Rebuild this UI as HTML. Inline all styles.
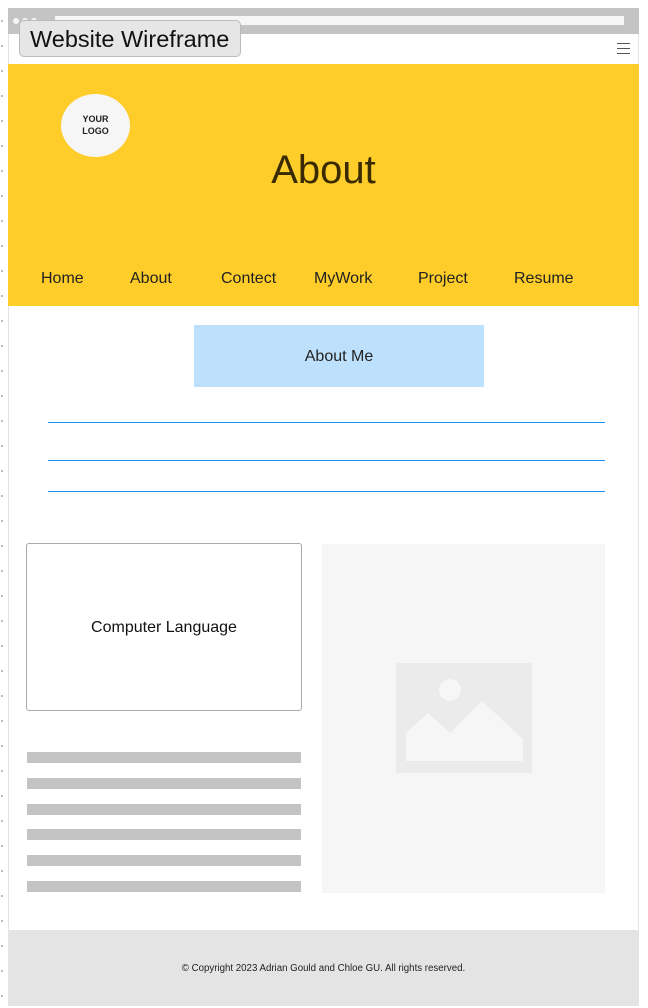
<!DOCTYPE html>
<html><head><meta charset="utf-8"><style>
*{margin:0;padding:0;box-sizing:border-box}
body{width:648px;height:1006px;background:#fff;position:relative;overflow:hidden;font-family:"Liberation Sans",sans-serif;color:#222}
.a{position:absolute}
.tick{position:absolute;left:1px;width:2px;height:2px;background:#bbb}
</style></head><body>
<div class="a" style="left:8px;top:8px;width:631px;height:998px;border:1px solid #e4e4e4"></div>
<div class="a" style="left:8px;top:8px;width:631px;height:26px;background:#c4c4c4"></div>
<div class="a" style="left:13px;top:18px;width:6px;height:6px;border-radius:50%;background:#f5f5f5"></div>
<div class="a" style="left:22px;top:18px;width:6px;height:6px;border-radius:50%;background:#f5f5f5"></div>
<div class="a" style="left:31px;top:18px;width:6px;height:6px;border-radius:50%;background:#f5f5f5"></div>
<div class="a" style="left:55px;top:16px;width:569px;height:9px;background:#f6f6f6"></div>
<div class="a" style="left:19px;top:20px;width:222px;height:37px;background:#e6e6e6;border:1px solid #bbb;border-radius:5px;font-size:23.5px;color:#111;line-height:36px;padding-left:10px;white-space:nowrap">Website Wireframe</div>
<div class="a" style="left:617px;top:43px;width:13px;height:1px;background:#555;box-shadow:0 5px 0 #555,0 10px 0 #555"></div>
<div class="a" style="left:8px;top:64px;width:631px;height:242px;background:#fecd2a"></div>
<div class="a" style="left:61px;top:94px;width:69px;height:63px;border-radius:50%;background:#f6f6f6;font-size:9px;font-weight:bold;text-align:center;line-height:12px;padding-top:19px;color:#222">YOUR<br>LOGO</div>
<div class="a" style="left:8px;top:148px;width:631px;text-align:center;font-size:40px;color:#3a2a00">About</div>
<div class="a" style="left:41px;top:270px;font-size:16px;color:#222">Home</div>
<div class="a" style="left:130px;top:270px;font-size:16px">About</div>
<div class="a" style="left:221px;top:270px;font-size:16px">Contect</div>
<div class="a" style="left:314px;top:270px;font-size:16px">MyWork</div>
<div class="a" style="left:418px;top:270px;font-size:16px">Project</div>
<div class="a" style="left:514px;top:270px;font-size:16px">Resume</div>
<div class="a" style="left:194px;top:325px;width:290px;height:62px;background:#bde1fd;text-align:center;line-height:64px;font-size:16px">About Me</div>
<div class="a" style="left:48px;top:422px;width:557px;height:1px;background:#1a8ef5"></div>
<div class="a" style="left:48px;top:460px;width:557px;height:1px;background:#1a8ef5"></div>
<div class="a" style="left:48px;top:491px;width:557px;height:1px;background:#1a8ef5"></div>
<div class="a" style="left:26px;top:543px;width:276px;height:168px;border:1.5px solid #aaa;border-radius:3px;text-align:center;line-height:168px;font-size:16px;color:#111">Computer Language</div>
<div class="a" style="left:27px;top:752px;width:274px;height:11px;background:#c4c4c4"></div>
<div class="a" style="left:27px;top:778px;width:274px;height:11px;background:#c4c4c4"></div>
<div class="a" style="left:27px;top:804px;width:274px;height:11px;background:#c4c4c4"></div>
<div class="a" style="left:27px;top:829px;width:274px;height:11px;background:#c4c4c4"></div>
<div class="a" style="left:27px;top:855px;width:274px;height:11px;background:#c4c4c4"></div>
<div class="a" style="left:27px;top:881px;width:274px;height:11px;background:#c4c4c4"></div>
<div class="a" style="left:322px;top:544px;width:283px;height:349px;background:#f6f6f6"></div>
<svg class="a" style="left:396px;top:663px" width="136" height="110"><rect width="136" height="110" fill="#ebebeb"/><circle cx="54" cy="27" r="11" fill="#f6f6f6"/><path d="M10 98V70L32 50L54 70L86 38L127 76V98Z" fill="#f6f6f6"/></svg>
<div class="a" style="left:8px;top:930px;width:631px;height:76px;background:#e4e4e4;text-align:center;line-height:78px;font-size:9.7px;color:#222">© Copyright 2023 Adrian Gould and Chloe GU. All rights reserved.</div>
<script>for(let y=20;y<1006;y+=25){let d=document.createElement('div');d.className='tick';d.style.top=y+'px';document.body.appendChild(d);}</script>
</body></html>
